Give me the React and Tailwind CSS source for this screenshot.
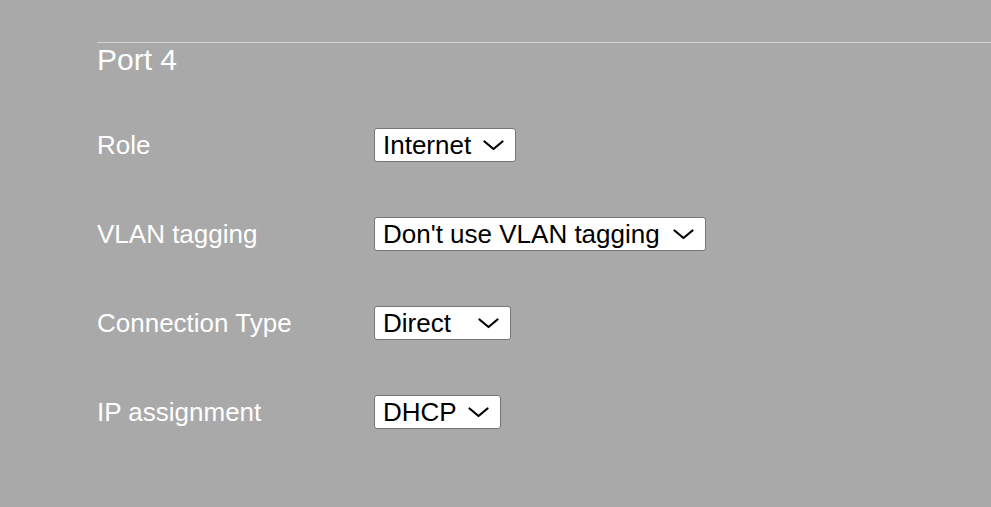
import React from 'react'

const rows = [
  { label: 'Role', value: 'Internet', width: 'w-[142px]' },
  { label: 'VLAN tagging', value: "Don't use VLAN tagging", width: 'w-[332px]' },
  { label: 'Connection Type', value: 'Direct', width: 'w-[137px]' },
  { label: 'IP assignment', value: 'DHCP', width: 'w-[127px]' },
]

const Chevron = () => (
  <svg width="21" height="11" viewBox="0 0 21 11" fill="none" className="shrink-0">
    <polyline points="1.5,1.5 10.5,9 19.5,1.5" stroke="#000" strokeWidth="2.2" strokeLinecap="round" strokeLinejoin="round" />
  </svg>
)

const Select = ({ value, width }) => (
  <div className={`${width} h-[34px] flex items-center justify-between bg-white border border-[#767676] rounded-[3px] pl-[8px] pr-[11px] text-black text-[26px] leading-none`}>
    <span className="whitespace-nowrap">{value}</span>
    <Chevron />
  </div>
)

export default function App() {
  return (
    <div className="min-h-screen w-full bg-[#a9a9a9] pt-[42px] pl-[97px] font-['Liberation_Sans',Arial,sans-serif] text-white">
      {/* Section header */}
      <div className="h-px bg-[#d3d3d3]" />
      <h2 className="mt-[2px] text-[30px] leading-[30px] font-normal">Port 4</h2>

      {/* Settings rows */}
      <div className="mt-[53px] flex flex-col gap-[55px]">
        {rows.map((row) => (
          <div key={row.label} className="flex items-center h-[34px]">
            <div className="w-[277px] text-[26px] leading-none">{row.label}</div>
            <Select value={row.value} width={row.width} />
          </div>
        ))}
      </div>
    </div>
  )
}
